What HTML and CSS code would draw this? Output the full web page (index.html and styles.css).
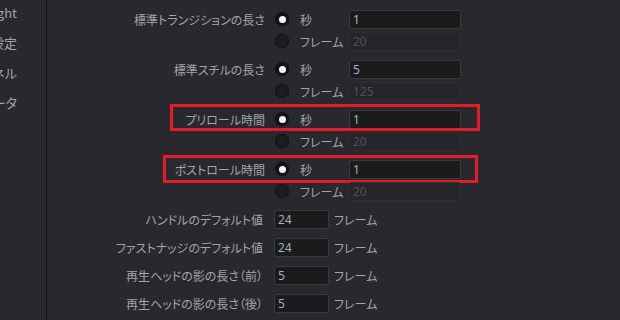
FILE: index.html
```html
<!DOCTYPE html>
<html lang="ja">
<head>
<meta charset="utf-8">
<link rel="stylesheet" href="styles.css">
</head>
<body>
<div class="app">
  <nav class="sidebar">
    <div class="nav-item nav-latin">Highlight</div>
    <div class="nav-item">一般設定</div>
    <div class="nav-item">パネル</div>
    <div class="nav-item">メタデータ</div>
  </nav>
  <main class="main">
    <div class="form">
      <div class="row row-top">
        <span class="label"></span><span></span><span></span>
        <span class="field"></span>
      </div>

      <div class="row">
        <span class="label">標準トランジションの長さ</span>
        <span class="radio on"></span><span class="opt">秒</span>
        <span class="field">1</span>
      </div>
      <div class="row">
        <span class="label"></span>
        <span class="radio"></span><span class="opt">フレーム</span>
        <span class="field off">20</span>
      </div>

      <div class="row group">
        <span class="label">標準スチルの長さ</span>
        <span class="radio on"></span><span class="opt">秒</span>
        <span class="field">5</span>
      </div>
      <div class="row">
        <span class="label"></span>
        <span class="radio"></span><span class="opt">フレーム</span>
        <span class="field off">125</span>
      </div>

      <div class="row group mark mark-pre">
        <span class="label">プリロール時間</span>
        <span class="radio on"></span><span class="opt">秒</span>
        <span class="field">1</span>
      </div>
      <div class="row">
        <span class="label"></span>
        <span class="radio"></span><span class="opt">フレーム</span>
        <span class="field off">20</span>
      </div>

      <div class="row group mark mark-post">
        <span class="label">ポストロール時間</span>
        <span class="radio on"></span><span class="opt">秒</span>
        <span class="field">1</span>
      </div>
      <div class="row">
        <span class="label"></span>
        <span class="radio"></span><span class="opt">フレーム</span>
        <span class="field off">20</span>
      </div>

      <div class="row2 group">
        <span class="label">ハンドルのデフォルト値</span>
        <span class="field small">24</span>
        <span class="opt">フレーム</span>
      </div>
      <div class="row2 group">
        <span class="label">ファストナッジのデフォルト値</span>
        <span class="field small">24</span>
        <span class="opt">フレーム</span>
      </div>
      <div class="row2 group">
        <span class="label">再生ヘッドの影の長さ（前）</span>
        <span class="field small">5</span>
        <span class="opt">フレーム</span>
      </div>
      <div class="row2 group">
        <span class="label">再生ヘッドの影の長さ（後）</span>
        <span class="field small">5</span>
        <span class="opt">フレーム</span>
      </div>
    </div>
  </main>
</div>
</body>
</html>
```

FILE: styles.css
```css
html, body {
  margin: 0;
  padding: 0;
  width: 620px;
  height: 320px;
  overflow: hidden;
  background: #28282e;
}
body {
  font-family: "Noto Sans CJK JP", "Noto Sans", sans-serif;
  font-feature-settings: "palt";
  font-size: 12px;
  color: #a4a4a6;
}
.app {
  display: flex;
  height: 320px;
}
.sidebar {
  width: 46px;
  flex: none;
  background: #29282e;
  border-right: 1px solid #101012;
  display: flex;
  flex-direction: column;
  padding-top: 4px;
  gap: 12px;
  overflow: hidden;
}
.nav-item {
  display: flex;
  justify-content: flex-end;
  white-space: nowrap;
  height: 18px;
  line-height: 18px;
  padding-right: 29px;
  font-size: 13px;
  color: #a2a2a4;
}
.nav-latin {
  color: #9aa6ae;
}
.main {
  flex: 1;
  overflow: hidden;
}
.form {
  display: flex;
  flex-direction: column;
  margin-top: -14px;
}
.row, .row2 {
  display: grid;
  height: 22px;
  align-items: center;
  position: relative;
}
.row {
  grid-template-columns: 218px 14px 50px 112px;
  column-gap: 0;
}
.row .radio { margin-left: 10px; }
.row .opt { margin-left: 21px; }
.row .field { margin-left: 0; }
.row {
  grid-template-columns: 218px 24px 60px 112px;
}
.row .radio, .row .opt { margin-left: 0; }
.row .radio { justify-self: end; }
.row .opt { padding-left: 11px; }
.row-top { height: 22px; }
.row-top .field { transform: translateY(-19px); }
.group { margin-top: 6px; }
.row2 {
  grid-template-columns: 216px 55px auto;
  column-gap: 0;
}
.row2 .field { margin-left: 11px; }
.row2 .opt { padding-left: 16px; }
.label {
  text-align: right;
  white-space: nowrap;
}
.radio {
  width: 14px;
  height: 14px;
  border-radius: 50%;
  background: #1c1c1e;
  box-shadow: inset 0 0 0 1px #141416;
  display: flex;
  align-items: center;
  justify-content: center;
}
.radio.on {
  background: #141416;
}
.radio.on::after {
  content: "";
  width: 7px;
  height: 7px;
  border-radius: 50%;
  background: #f4f4f4;
}
.opt {
  white-space: nowrap;
}
.field {
  box-sizing: border-box;
  height: 19px;
  line-height: 17px;
  background: #1b1b1c;
  border: 1px solid #3a3a3c;
  border-radius: 2px;
  padding-left: 3px;
  font-family: "Noto Sans", sans-serif;
  font-size: 12px;
  color: #9fb6c9;
}
.field.off {
  background: #26262a;
  border-color: #2f2f33;
  color: #505054;
}
.field.small {
  width: 55px;
  color: #a6aeb5;
}
.mark::after {
  content: "";
  position: absolute;
  border: 3px solid #e31d25;
  pointer-events: none;
}
.mark-pre::after {
  left: 123px;
  top: -4px;
  width: 304px;
  height: 21px;
}
.mark-post::after {
  left: 116px;
  top: -3px;
  width: 309px;
  height: 22px;
}
```
